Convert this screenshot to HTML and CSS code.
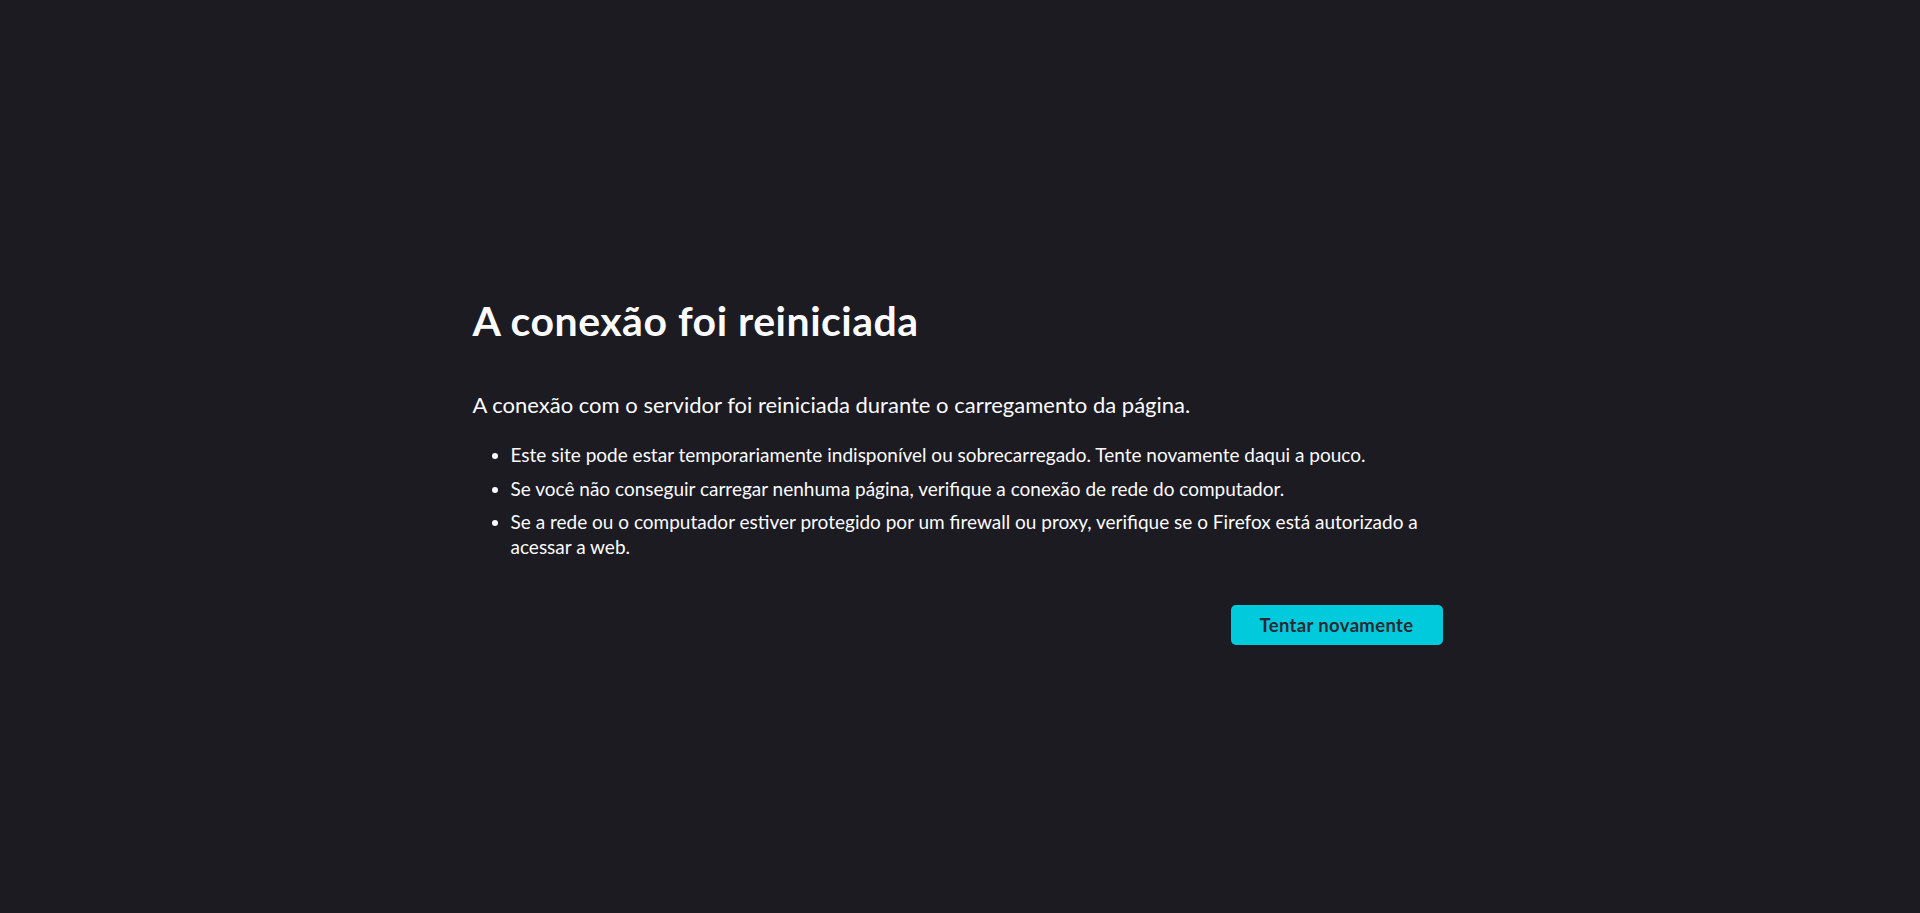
FILE: index.html
```html
<!DOCTYPE html>
<html lang="pt-BR">
<head>
<meta charset="utf-8">
<title>Problema ao carregar página</title>
<link rel="stylesheet" href="styles.css">
</head>
<body>
<main class="container">
  <h1 class="title">A conexão foi reiniciada</h1>
  <p class="short-desc">A conexão com o servidor foi reiniciada durante o carregamento da página.</p>
  <ul class="long-desc">
    <li>Este site pode estar temporariamente indisponível ou sobrecarregado. Tente novamente daqui a pouco.</li>
    <li>Se você não conseguir carregar nenhuma página, verifique a conexão de rede do computador.</li>
    <li>Se a rede ou o computador estiver protegido por um firewall ou proxy, verifique se o Firefox está autorizado a acessar a web.</li>
  </ul>
  <div class="actions">
    <button class="primary">Tentar novamente</button>
  </div>
</main>
</body>
</html>
```

FILE: styles.css
```css
html, body {
  margin: 0;
  padding: 0;
}
body {
  background: #1c1b22;
  color: #fbfbfe;
  font-family: Lato, "Noto Sans", sans-serif;
  font-size: 19px;
  min-height: 100vh;
  padding-right: 5px;
}
.container {
  width: 970px;
  margin: 0 auto;
  padding-top: 296px;
  box-sizing: border-box;
}
.title {
  margin: 0;
  font-size: 41px;
  font-weight: 700;
  line-height: 50px;
  letter-spacing: 0.5px;
}
.short-desc {
  margin: 44px 0 0;
  font-size: 22px;
  line-height: 30px;
}
.long-desc {
  margin: 22px 0 0;
  padding-left: 38px;
  line-height: 25px;
}
.long-desc li {
  margin-bottom: 8.5px;
}
.actions {
  display: flex;
  justify-content: flex-end;
  margin-top: 46px;
}
.primary {
  width: 212px;
  height: 40px;
  border: none;
  border-radius: 5px;
  background: #00cadb;
  color: #2b2a33;
  font-family: inherit;
  font-size: 18.5px;
  font-weight: 700;
  letter-spacing: 0.35px;
  padding: 0;
}
```
